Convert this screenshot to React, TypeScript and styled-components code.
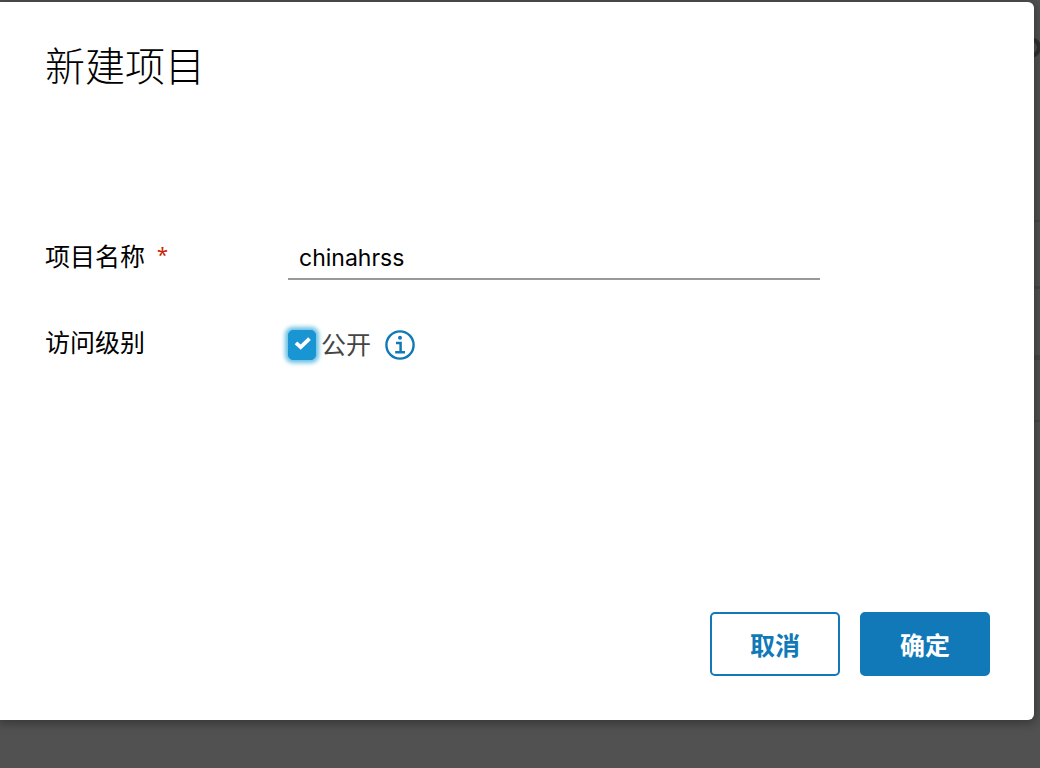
import React, { useState } from "react";
import styled, { createGlobalStyle } from "styled-components";

const GlobalStyle = createGlobalStyle`
  *, *::before, *::after { box-sizing: border-box; }
  body {
    margin: 0;
    background: #515151;
    color: #000;
    font-family: Inter, "Noto Sans CJK SC", sans-serif;
    font-size: 25px;
    line-height: 36px;
  }
  button, input { font: inherit; }
`;

const Backdrop = styled.div`
  position: relative;
  min-height: 100vh;
  padding: 2px 6px 48px 0;
  overflow: hidden;
  background: #515151;
`;

const PageBehind = styled.div`
  position: absolute;
  top: 0;
  right: 0;
  width: 22px;
  height: 720px;
  overflow: hidden;
`;

const Knob = styled.span`
  position: absolute;
  top: 37px;
  right: -1px;
  width: 21px;
  height: 21px;
  border: 4px solid #303030;
  border-radius: 50%;
`;

const Rule = styled.span<{ $top: number; $size: number }>`
  position: absolute;
  top: ${(p) => p.$top}px;
  right: 0;
  width: 100%;
  height: ${(p) => p.$size}px;
  background: #454747;
`;

const Dialog = styled.form`
  position: relative;
  display: flex;
  flex-direction: column;
  padding: 34px 44px 44px 45px;
  border-radius: 0 6px 6px 0;
  background: #fff;
  box-shadow: 0 2px 10px 2px rgba(0, 0, 0, 0.3);
`;

const Title = styled.h1`
  margin: 0 0 144px;
  font-family: "Noto Sans CJK SC", sans-serif;
  font-size: 40px;
  font-weight: 300;
  line-height: 56px;
`;

const Fields = styled.div`
  display: grid;
  grid-template-columns: 243px minmax(0, 1fr);
  row-gap: 42px;
  margin-bottom: 244px;
`;

const Label = styled.label`
  line-height: 42px;
`;

const Required = styled.span`
  margin-left: 12px;
  color: #c92100;
  font-family: "Noto Sans", sans-serif;
  font-size: 20px;
  line-height: 20px;
  vertical-align: 4px;
`;

const TextInput = styled.input`
  width: 532px;
  max-width: 100%;
  height: 44px;
  padding: 2px 11px 0;
  border: 0;
  border-bottom: 2px solid #999;
  border-radius: 0;
  outline: 0;
  background: transparent;
  color: #000;
  font-size: 23px;
`;

const Access = styled.div`
  display: flex;
  align-items: center;
  height: 46px;
`;

const CheckWrap = styled.span`
  display: grid;
  width: 28px;
  height: 30px;
  margin-right: 5px;

  > * { grid-area: 1 / 1; }

  svg { pointer-events: none; z-index: 1; }
`;

const Check = styled.input`
  appearance: none;
  width: 28px;
  height: 30px;
  margin: 0;
  border: 1px solid #9a9a9a;
  border-radius: 5px;
  outline: 0;

  &:checked {
    border-color: #1a95d3;
    background: #1a95d3;
    box-shadow: 0 0 4px 3px #6bc1e3;
  }
`;

const CheckLabel = styled.label`
  color: #454545;
  line-height: 42px;
`;

const InfoButton = styled.button`
  display: flex;
  margin-left: 14px;
  padding: 0;
  border: 0;
  background: none;
`;

const Actions = styled.div`
  display: flex;
  justify-content: flex-end;
  gap: 20px;
`;

const Button = styled.button<{ $primary?: boolean }>`
  min-width: 130px;
  height: 64px;
  padding: 3px 24px 0;
  border: 2px solid #1179b8;
  border-radius: 5px;
  background: ${(p) => (p.$primary ? "#1179b8" : "#fff")};
  color: ${(p) => (p.$primary ? "#fff" : "#1179b8")};
  font-weight: 700;
`;

export default function App() {
  const [name, setName] = useState("chinahrss");
  const [open, setOpen] = useState(true);

  return (
    <>
      <GlobalStyle />
      <Backdrop>
        <PageBehind aria-hidden="true">
          <Knob />
          <Rule $top={220} $size={2} />
          <Rule $top={286} $size={3} />
          <Rule $top={355} $size={5} />
          <Rule $top={420} $size={2} />
        </PageBehind>
        <Dialog
          role="dialog"
          aria-labelledby="dialog-title"
          onSubmit={(e: React.FormEvent) => e.preventDefault()}
        >
          <Title id="dialog-title">新建项目</Title>
          <Fields>
            <Label htmlFor="project-name">
              项目名称<Required>*</Required>
            </Label>
            <TextInput
              id="project-name"
              type="text"
              required
              value={name}
              onChange={(e) => setName(e.target.value)}
            />
            <Label as="span">访问级别</Label>
            <Access>
              <CheckWrap>
                <Check
                  id="public"
                  type="checkbox"
                  checked={open}
                  onChange={(e) => setOpen(e.target.checked)}
                />
                {open && (
                  <svg width="28" height="30" viewBox="0 0 28 30" fill="none" aria-hidden="true">
                    <path d="M8 12.8l4.7 4.4 8.8-8.6" stroke="#fff" strokeWidth="3.8" />
                  </svg>
                )}
              </CheckWrap>
              <CheckLabel htmlFor="public">公开</CheckLabel>
              <InfoButton type="button" aria-label="访问级别说明">
                <svg width="30" height="30" viewBox="0 0 30 30" fill="none" aria-hidden="true">
                  <circle cx="15" cy="15" r="13.6" stroke="#1179b8" strokeWidth="2.4" />
                  <circle cx="15" cy="7.8" r="2" fill="#1179b8" />
                  <path d="M11 12.9H15.6V22M10.2 22.3H20" stroke="#1179b8" strokeWidth="2.5" />
                </svg>
              </InfoButton>
            </Access>
          </Fields>
          <Actions>
            <Button type="button">取消</Button>
            <Button type="submit" $primary>确定</Button>
          </Actions>
        </Dialog>
      </Backdrop>
    </>
  );
}
